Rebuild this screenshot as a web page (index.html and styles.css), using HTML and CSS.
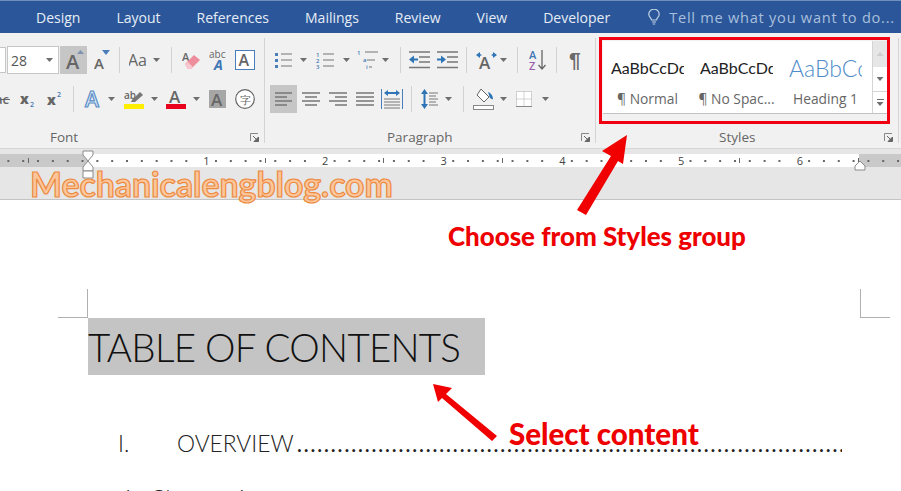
FILE: index.html
```html
<!DOCTYPE html>
<html lang="en">
<head>
    <meta charset="UTF-8">
    <title>Table of contents - Styles group</title>
    <link rel="stylesheet" href="styles.css">
</head>
<body>
<div class="page">
    <!-- tabs -->
    <nav class="tabs">
        <span>Design</span><span>Layout</span><span>References</span><span>Mailings</span><span>Review</span><span>View</span><span>Developer</span>
        <div class="tell">
            <svg width="12" height="16" viewBox="0 0 12 16" fill="none" stroke="#c3d2e6" stroke-width="1.2"><path d="M3.5 11C3 8.5.8 8 .8 5.2a5.2 5 0 0 1 10.4 0C11.2 8 9 8.500 8.500 11z"/><path d="M4 13h4M4.800 15h2.400"/></svg>
            <span>Tell me what you want to do...</span>
        </div>
    </nav>

    <!-- ribbon -->
    <div class="ribbon">
        <section class="grp grp-font">
            <div class="row">
                <span class="stub"></span>
                <div class="sizebox ml1"><span>28</span><i class="caret"></i></div>
                <div class="btn-on ml1"><svg width="27" height="28" viewBox="0 0 27 28"><text x="6" y="23" class="gl" font-size="20">A</text><path d="M17 8l3.500-4 3.500 4z" fill="#7d93ad"/></svg></div>
                <svg class="ml7" width="16" height="24" viewBox="0 0 16 24"><text x="0" y="21" class="gl" font-size="15">A</text><path d="M8 2h8l-4 5z" fill="#4a7ebb"/></svg>
                <i class="sep ml9"></i>
                <svg class="ml9" width="18" height="20" viewBox="0 0 18 20"><text x="-1" y="16" class="gl lt" font-size="16">Aa</text></svg>
                <i class="caret ml6"></i>
                <i class="sep ml11"></i>
                <svg class="ml10" width="19" height="22" viewBox="0 0 19 22"><text x="0" y="12" class="gl" font-size="11" fill="#777">A</text><path d="M3 15l9-9 6 5-9 9H6z" fill="#ee8d9c"/><path d="M3 15l3-2 5 5-2 2H6z" fill="#f7c6ce"/></svg>
                <svg class="ml8" width="17" height="22" viewBox="0 0 17 22"><text x="0" y="9" class="gl lt" font-size="10">abc</text><text x="5" y="21" class="gl bl it" font-size="14">A</text></svg>
                <svg class="ml9" width="20" height="20" viewBox="0 0 20 20"><rect x=".5" y=".5" width="19" height="19" fill="#fff" stroke="#4a7ebb"/><text x="3.500" y="16" class="gl" font-size="16">A</text></svg>
            </div>
            <div class="row row2">
                <svg width="10" height="14" viewBox="0 0 10 14"><text x="-5" y="12" class="gl" font-size="13">ac</text><path d="M0 7.500h10" stroke="#666"/></svg>
                <svg class="ml10" width="15" height="18" viewBox="0 0 15 18"><text x="0" y="14" class="gl hv" font-size="14">x</text><text x="10" y="17" class="gl bl" font-size="7">2</text></svg>
                <svg class="ml12" width="15" height="18" viewBox="0 0 15 18"><text x="0" y="15" class="gl hv" font-size="14">x</text><text x="10" y="7" class="gl bl" font-size="7">2</text></svg>
                <i class="sep ml11"></i>
                <svg class="ml10" width="19" height="20" viewBox="0 0 19 20"><text x="1" y="18" class="gl gl-fx" font-size="21">A</text></svg>
                <i class="caret ml5"></i>
                <svg class="ml9" width="20" height="20" viewBox="0 0 20 20"><text x="0" y="10" class="gl" font-size="10">ab</text><path d="M8 11l8-8 3 3-8 7H7z" fill="#777"/><rect y="15" width="20" height="5" fill="#ffee00"/></svg>
                <i class="caret ml7"></i>
                <svg class="ml8" width="20" height="20" viewBox="0 0 20 20"><text x="3" y="14" class="gl" font-size="17">A</text><rect y="15" width="20" height="5" fill="#e8001c"/></svg>
                <i class="caret ml7"></i>
                <svg class="ml9" width="17" height="18" viewBox="0 0 17 18"><rect width="17" height="18" fill="#a6a6a6"/><text x="2" y="16" class="gl" font-size="17">A</text></svg>
                <svg class="ml9" width="20" height="20" viewBox="0 0 20 20"><circle cx="10" cy="10" r="9.300" fill="#fff" stroke="#666" stroke-width="1.200"/><text x="4.500" y="14.500" class="gl lt" font-size="11">字</text></svg>
            </div>
            <div class="foot"><span class="foot-name">Font</span><svg class="launcher" width="9" height="9" viewBox="0 0 9 9"><path d="M.5 8V.5H8" fill="none" stroke="#888"/><path d="M3 3l4 4M8.500 4v4.500H4z" stroke="#666" fill="#666"/></svg></div>
        </section>

        <section class="grp grp-para">
            <div class="row">
                <svg class="ml9" width="18" height="18" viewBox="0 0 18 18"><path d="M7 3h11M7 9h11M7 15h11" stroke="#777" stroke-width="1.200"/><path d="M1 2h3v3H1zM1 8h3v3H1zM1 14h3v3H1z" fill="#4a7ebb"/></svg>
                <i class="caret ml8"></i>
                <svg class="ml9" width="18" height="18" viewBox="0 0 18 18"><path d="M7 3h11M7 9h11M7 15h11" stroke="#777" stroke-width="1.200"/><text x="0" y="6" class="gl bl" font-size="6">1</text><text x="0" y="12" class="gl bl" font-size="6">2</text><text x="0" y="18" class="gl bl" font-size="6">3</text></svg>
                <i class="caret ml9"></i>
                <svg class="ml7" width="21" height="20" viewBox="0 0 21 20"><path d="M8 2h13M10 10h8M12 17h3" stroke="#777" stroke-width="1.200"/><text x="0" y="5" class="gl bl" font-size="6">1</text><text x="6" y="12" class="gl bl" font-size="6">a</text><text x="9" y="19" class="gl bl" font-size="6">i</text></svg>
                <i class="caret ml4"></i>
                <i class="sep ml11"></i>
                <svg class="ml8" width="21" height="18" viewBox="0 0 21 18"><path d="M0 1h21M10 6h11M10 11h11M0 16.500h21" stroke="#777" stroke-width="1.300"/><path d="M0 8.500l5-4v3h4v2H5v3z" fill="#2f74b5"/></svg>
                <svg class="ml7" width="21" height="18" viewBox="0 0 21 18"><path d="M0 1h21M10 6h11M10 11h11M0 16.500h21" stroke="#777" stroke-width="1.300"/><path d="M9 8.500l-5-4v3H0v2h4v3z" fill="#2f74b5"/></svg>
                <i class="sep ml8"></i>
                <svg class="ml8" width="23" height="20" viewBox="0 0 23 20"><text x="4" y="19" class="gl" font-size="17">A</text><path d="M1 5l4-3v2l2 1-2 1v2zM22 5l-4-3v2l-2 1 2 1v2z" fill="#2f74b5"/></svg>
                <i class="caret ml2"></i>
                <i class="sep ml10"></i>
                <svg class="ml11" width="18" height="22" viewBox="0 0 18 22"><text x="0" y="10" class="gl bl" font-size="11">A</text><text x="0" y="21" class="gl pu" font-size="11">Z</text><path d="M13 1v19M9.500 16l3.500 4 3.500-4" fill="none" stroke="#666" stroke-width="1.300"/></svg>
                <i class="sep ml9"></i>
                <span class="pilcrow ml12">¶</span>
            </div>
            <div class="row row2">
                <div class="btn-on ml5"><svg width="27" height="28" viewBox="0 0 27 28"><path d="M5 8h17M5 12h12M5 16h17M5 20h12" stroke="#777" stroke-width="1.300"/></svg></div>
                <svg class="ml5" width="18" height="14" viewBox="0 0 18 14"><path d="M0 1h18M3 5h12M0 9h18M3 13h12" stroke="#777" stroke-width="1.300"/></svg>
                <svg class="ml9" width="18" height="14" viewBox="0 0 18 14"><path d="M0 1h18M6 5h12M0 9h18M6 13h12" stroke="#777" stroke-width="1.300"/></svg>
                <svg class="ml9" width="18" height="14" viewBox="0 0 18 14"><path d="M0 1h18M0 5h18M0 9h18M0 13h18" stroke="#777" stroke-width="1.300"/></svg>
                <svg class="ml7" width="22" height="20" viewBox="0 0 22 20"><path d="M.5 0v20M21.500 0v20" stroke="#4a7ebb"/><path d="M3 10h16M3 13h16M3 16h16M3 19h16" stroke="#777"/><path d="M3 4l4-3v2h8V1l4 3-4 3V5H7v2z" fill="#2f74b5"/></svg>
                <i class="sep ml8"></i>
                <svg class="ml9" width="17" height="22" viewBox="0 0 17 22"><path d="M8 5h9M8 11h9M8 17h9M8 8h7M8 14h7" stroke="#777"/><path d="M3.500 1L0 6h2.500v10H0l3.500 5L7 16H4.500V6H7z" fill="#2f74b5"/></svg>
                <i class="caret ml7"></i>
                <i class="sep ml11"></i>
                <svg class="ml9" width="21" height="22" viewBox="0 0 21 22"><path d="M8 1l8 8-5 5-7-7z" fill="#fff" stroke="#666"/><path d="M15 4c3 1 5 4 5 7-2 1-4-2-4-4z" fill="#2f74b5"/><rect x=".5" y="17.500" width="20" height="4" fill="#fff" stroke="#888"/></svg>
                <i class="caret ml6"></i>
                <svg class="ml9" width="16" height="16" viewBox="0 0 16 16"><path d="M.5.500h15v15H.5zM8 .500v15M.5 8h15" fill="#fff" stroke="#aaa" stroke-dasharray="1 1"/><path d="M0 15.500h16" stroke="#888"/></svg>
                <i class="caret ml10"></i>
            </div>
            <div class="foot"><span class="foot-name">Paragraph</span><svg class="launcher" width="9" height="9" viewBox="0 0 9 9"><path d="M.5 8V.5H8" fill="none" stroke="#888"/><path d="M3 3l4 4M8.500 4v4.500H4z" stroke="#666" fill="#666"/></svg></div>
        </section>

        <section class="grp grp-styles">
            <div class="gallery">
                <div class="style-item"><div class="sample">AaBbCcDdEe</div><div class="style-name">¶ Normal</div></div>
                <div class="style-item"><div class="sample">AaBbCcDdEe</div><div class="style-name">¶ No Spac...</div></div>
                <div class="style-item"><div class="sample sample-h">AaBbCcDd</div><div class="style-name">Heading 1</div></div>
                <div class="scroll">
                    <div class="sc sc-up"><i class="tri-up"></i></div>
                    <div class="sc sc-mid"><i class="caret"></i></div>
                    <div class="sc sc-more"><b></b><i class="caret"></i></div>
                </div>
            </div>
            <div class="foot"><span class="foot-name">Styles</span><svg class="launcher" width="9" height="9" viewBox="0 0 9 9"><path d="M.5 8V.5H8" fill="none" stroke="#888"/><path d="M3 3l4 4M8.500 4v4.500H4z" stroke="#666" fill="#666"/></svg></div>
        </section>
    </div>

    <!-- ruler -->
    <div class="ruler-band">
        <div class="ruler">
            <span>1</span><span>2</span><span>3</span><span>4</span><span>5</span><span>6</span>
        </div>
    </div>

    <!-- document -->
    <main class="doc">
        <div class="sel"><h1>TABLE OF CONTENTS</h1></div>
        <div class="toc toc-1"><span class="num">I.</span><span>OVERVIEW</span><span class="dots">........................................................................................................................................................</span></div>
        <div class="toc toc-2"><span class="num num-2">1.</span><span>Chapter 1</span></div>
    </main>

    <!-- marks on top of the screenshot -->
    <i class="crop crop-l"></i>
    <i class="crop crop-r"></i>
    <svg class="indent-l" width="12" height="29" viewBox="0 0 12 29"><path d="M1 1h10v4l-5 6-5-6zM6 11l5 6v4H1v-4z" fill="#fff" stroke="#8a8a8a"/><path d="M1 21h10v7H1z" fill="#fff" stroke="#8a8a8a"/></svg>
    <svg class="indent-r" width="12" height="11" viewBox="0 0 12 11"><path d="M6 1l5 5v4H1V6z" fill="#fff" stroke="#8a8a8a"/></svg>
    <div class="logo">Mechanicalengblog.com</div>
    <div class="red-box"></div>
    <svg class="arrows" width="901" height="491" viewBox="0 0 901 491">
        <path d="M627 135L602 151 611 156 577 210 586 215 618 161 623 164z" fill="#f00000"/>
        <path d="M433 384L452 388 446 394 497 436 492 441 442 398 438 402z" fill="#f00000"/>
    </svg>
    <div class="note note-styles">Choose from Styles group</div>
    <div class="note note-select">Select content</div>
</div>
</body>
</html>
```
FILE: styles.css
```css
html, body { margin: 0; padding: 0; }
body { font-family: "Open Sans", Arial, sans-serif; background: #fff; }
.page { position: relative; width: 901px; height: 491px; overflow: hidden; }
i { display: block; }

/* tabs */
.tabs { display: flex; align-items: center; gap: 36px; height: 33px; padding-left: 36px; background: #2b579a; border-top: 1px solid #6f8fbd; box-sizing: border-box; color: #e6ecf5; font-size: 14px; white-space: nowrap; }
.tell { display: flex; align-items: center; gap: 9px; margin-left: 2px; color: #a9bfdc; font-size: 14.6px; letter-spacing: .74px; }

/* ribbon */
.ribbon { display: flex; height: 115px; background: #f1f1f1; border-bottom: 1px solid #d6d6d6; }
.grp { box-sizing: border-box; display: flex; flex-direction: column; margin: 5px 0; height: 105px; padding-top: 8px; border-right: 1px solid #d4d4d4; }
.grp-font { width: 265px; }
.grp-para { width: 331px; }
.grp-styles { width: 303px; padding-top: 3px; }
.row { display: flex; align-items: center; height: 28px; }
.row2 { margin-top: 11px; }
.foot { display: flex; align-items: center; height: 12px; margin-top: auto; color: #666; font-size: 13.5px; }
.grp-font .foot { padding-left: 50px; }
.grp-para .foot { padding-left: 122px; }
.grp-styles .foot { padding-left: 123px; }
.launcher { margin-left: auto; margin-right: 5px; }

.stub { width: 6px; height: 26px; background: #fff; border: solid #c6c6c6; border-width: 1px 1px 1px 0; box-sizing: border-box; }
.sizebox { box-sizing: border-box; display: flex; align-items: center; justify-content: space-between; width: 52px; height: 28px; padding: 0 5px 0 3px; background: #fff; border: 1px solid #c6c6c6; color: #555; font-size: 14px; }
.btn-on { width: 27px; height: 28px; background: #c6c6c6; }
.sep { width: 1px; height: 26px; background: #d2d2d2; }
.caret { flex: none; width: 7px; height: 4px; background: #6e6e6e; clip-path: polygon(0 0, 100% 0, 50% 100%); }
.pilcrow { width: 13px; color: #6a6a6a; font-size: 21px; font-weight: 700; line-height: 20px; font-family: "Liberation Sans", sans-serif; }
.gl { font-family: "Open Sans", sans-serif; fill: #666; font-weight: 600; }
.lt { font-weight: 400; }
.hv { font-weight: 800; }
.bl { fill: #3f78b5; }
.pu { fill: #9a5fa8; }
.it { font-style: italic; font-weight: 700; }
.gl-fx { fill: #dbe8f5; stroke: #5b8fc7; stroke-width: 1.2px; }

.ml1 { margin-left: 1px; } .ml2 { margin-left: 2px; } .ml4 { margin-left: 4px; }
.ml5 { margin-left: 5px; } .ml6 { margin-left: 6px; } .ml7 { margin-left: 7px; }
.ml8 { margin-left: 8px; } .ml9 { margin-left: 9px; } .ml10 { margin-left: 10px; }
.ml11 { margin-left: 11px; } .ml12 { margin-left: 12px; }

/* styles gallery */
.gallery { display: flex; height: 73px; margin-left: 7px; background: #fff; border-bottom: 1px solid #c2c2c2; box-sizing: border-box; width: 284px; }
.style-item { width: 89px; overflow: hidden; text-align: center; }
.sample { width: 73px; height: 40px; margin: 8px 0 0 8px; overflow: hidden; white-space: nowrap; text-align: left; color: #222; font-family: Lato, sans-serif; font-size: 16px; line-height: 38px; }
.sample-h { color: #4f8cc9; font-size: 23px; font-weight: 300; }
.style-name { margin-top: 1px; color: #666; font-size: 13.8px; line-height: 18px; white-space: nowrap; }
.scroll { width: 15px; margin-left: 2px; }
.sc { display: flex; flex-direction: column; align-items: center; justify-content: center; box-sizing: border-box; border-left: 1px solid #d4d4d4; }
.sc-up { height: 26px; background: #e6e6e6; }
.sc-mid { height: 25px; border-bottom: 1px solid #d4d4d4; }
.sc-more { height: 21px; gap: 2px; }
.sc-more b { width: 7px; height: 1px; background: #6e6e6e; }
.tri-up { width: 7px; height: 4px; background: #cfcfcf; clip-path: polygon(50% 0, 100% 100%, 0 100%); }

/* ruler */
.ruler-band { box-sizing: border-box; height: 51px; padding-top: 5px; background: #e6e6e6; border-bottom: 1px solid #c4c4c4; }
.ruler { display: flex; height: 13px; padding-left: 147px; color: #444; font-size: 11px; line-height: 13px;
    background-image: linear-gradient(to right, #666 0 1.5px, transparent 1.5px), linear-gradient(#666, #666), linear-gradient(to right, #c9c9c9 88px, #fff 88px, #fff 859px, #c9c9c9 859px);
    background-size: 14.84px 2px, 1px 5px, 100% 100%;
    background-position: 7.4px 6px, 28px 4px, 0 0;
    background-repeat: repeat-x, no-repeat, no-repeat; }
.ruler span { width: 118.7px; text-align: center; flex: none;
    background-image: linear-gradient(#666, #666), linear-gradient(#fff, #fff);
    background-size: 1px 5px, 14px 13px;
    background-position: 100% 4px, 50% 0;
    background-repeat: no-repeat; }

/* document */
.doc { padding-top: 118px; color: #222; font-family: Lato, sans-serif; font-weight: 300; }
.sel { width: 397px; height: 57px; margin-left: 88px; background: #c4c4c4; }
.sel h1 { margin: 0; color: #111; font-size: 38.5px; font-weight: 300; letter-spacing: -.75px; line-height: 58px; white-space: nowrap; }
.toc { display: flex; margin-left: 118px; width: 724px; font-size: 22.8px; line-height: 30px; white-space: nowrap; overflow: hidden; }
.toc-1 { margin-top: 53px; }
.toc-2 { margin-top: 25px; }
.num { flex: none; width: 59px; }
.num-2 { width: 32px; text-indent: 3px; }
.dots { flex: 1; overflow: hidden; font-weight: 400; letter-spacing: 1.4px; margin-left: 3px; }

/* overlays */
.crop { position: absolute; width: 29px; height: 28px; border-bottom: 1px solid #b0b0b0; }
.crop-l { left: 58px; top: 289px; border-right: 1px solid #b0b0b0; }
.crop-r { left: 860px; top: 289px; border-left: 1px solid #b0b0b0; }
.indent-l { position: absolute; left: 82px; top: 150px; }
.indent-r { position: absolute; left: 854px; top: 160px; }
.logo { position: absolute; left: 30px; top: 164px; color: #fcc69b; font-family: Lato, sans-serif; font-size: 33.8px; font-weight: 700; line-height: 40px; white-space: nowrap; -webkit-text-stroke: 1.2px #ed8a3f; }
.red-box { position: absolute; left: 599px; top: 37px; width: 285px; height: 81px; border: 3px solid #f00010; }
.arrows { position: absolute; left: 0; top: 0; }
.note { position: absolute; color: #ee0000; font-family: Lato, sans-serif; font-weight: 900; white-space: nowrap; }
.note-styles { left: 448px; top: 220px; font-size: 25.9px; line-height: 32px; }
.note-select { left: 509px; top: 416px; font-size: 29.5px; line-height: 36px; }
```
